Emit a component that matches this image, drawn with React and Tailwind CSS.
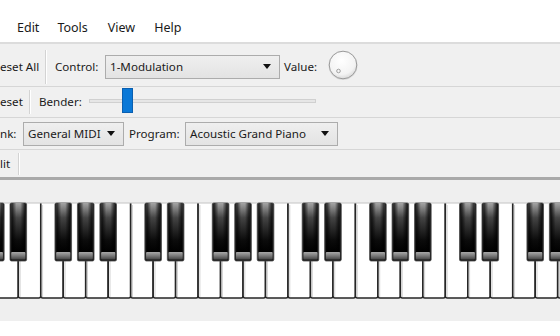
import React from "react";

const W = 22.475;
const X0 = -4.17;
const TOP = 23;
const WH = 95;
const BH = 58;
const BW = 16.6;

function Keyboard() {
  const whites = [];
  for (let i = 0; i < 27; i++) whites.push(X0 + i * W);
  const blacks = [];
  for (let b = 0; b < 27; b++) {
    const m = ((b - 2) % 7 + 7) % 7;
    if (m === 0 || m === 4) continue;
    blacks.push(X0 + b * W);
  }
  return (
    <svg width="560" height="142" viewBox="0 0 560 142" className="block">
      <defs>
        <linearGradient id="bk" x1="0" y1="0" x2="0" y2="1">
          <stop offset="0" stopColor="#a4a4a4" />
          <stop offset="0.3" stopColor="#444" />
          <stop offset="0.75" stopColor="#0c0c0c" />
          <stop offset="1" stopColor="#000" />
        </linearGradient>
        <linearGradient id="bkh" x1="0" y1="0" x2="1" y2="0">
          <stop offset="0" stopColor="#000" stopOpacity="0.8" />
          <stop offset="0.35" stopColor="#000" stopOpacity="0" />
          <stop offset="0.65" stopColor="#000" stopOpacity="0" />
          <stop offset="1" stopColor="#000" stopOpacity="0.8" />
        </linearGradient>
        <linearGradient id="bev" x1="0" y1="0" x2="0" y2="1">
          <stop offset="0" stopColor="#a8a8a8" />
          <stop offset="0.5" stopColor="#7a7a7a" />
          <stop offset="1" stopColor="#444" />
        </linearGradient>
      </defs>
      {whites.map((x, i) => (
        <g key={"w" + i}>
          <path
            d={`M${x} ${TOP} L${x} ${TOP + WH - 2} Q${x} ${TOP + WH} ${x + 2} ${TOP + WH} L${x + W - 2} ${TOP + WH} Q${x + W} ${TOP + WH} ${x + W} ${TOP + WH - 2} L${x + W} ${TOP}`}
            fill="#ffffff"
            stroke="#262626"
            strokeWidth="1.6"
          />
          <line x1={x + 1.8} y1={TOP + 2} x2={x + 1.8} y2={TOP + WH - 1} stroke="#d2d2d2" strokeWidth="1" />
        </g>
      ))}
      <line x1="0" y1={TOP} x2="560" y2={TOP} stroke="#c4c4c4" strokeWidth="1" />
      {blacks.map((c, i) => {
        const x = c - BW / 2;
        return (
          <g key={"b" + i}>
            <rect x={x} y={TOP} width={BW} height={BH} rx="1.5" fill="#1a1a1a" stroke="#4a4a4a" strokeWidth="0.8" />
            <rect x={x + 1.6} y={TOP} width={BW - 3.2} height={BH - 9} fill="url(#bk)" />
            <rect x={x + 1.6} y={TOP} width={BW - 3.2} height={BH - 9} fill="url(#bkh)" />
            <rect x={x + 1.2} y={TOP + BH - 9} width={BW - 2.4} height={7.5} rx="1" fill="url(#bev)" />
          </g>
        );
      })}
    </svg>
  );
}

function Combo({ text, className }) {
  return (
    <div
      className={
        "flex items-center justify-between h-[24px] border border-[#acacac] bg-gradient-to-b from-[#efefef] to-[#e3e3e3] pl-[4px] pr-[8px] whitespace-nowrap " +
        (className || "")
      }
    >
      <span>{text}</span>
      <svg width="8" height="5" viewBox="0 0 8 5">
        <path d="M0 0 L8 0 L4 5 Z" fill="#111" />
      </svg>
    </div>
  );
}

function Sep({ className }) {
  return <div className={"w-[2px] border-l border-[#d3d3d3] border-r border-r-white " + (className || "")} />;
}

export default function App() {
  return (
    <div
      className="w-[560px] h-[336px] overflow-hidden bg-white text-[#1a1a1a] text-[11.6px]"
      style={{ fontFamily: '"Noto Sans", "Open Sans", sans-serif' }}
    >
      {/* menu bar */}
      <div className="h-[42px] flex items-end pb-[4px] text-[12.5px] bg-white">
        <span className="ml-[17px]">Edit</span>
        <span className="ml-[18px]">Tools</span>
        <span className="ml-[20px]">View</span>
        <span className="ml-[19px]">Help</span>
      </div>
      <div className="h-[2px] bg-[#dcdcdc]" />
      {/* row 1 */}
      <div className="h-[43px] flex items-center pt-[3px] bg-[#f0f0f0] border-b border-[#d6d6d6]">
        <span className="w-[36px] whitespace-nowrap">eset All</span>
        <Sep className="ml-[9px] h-[34px]" />
        <span className="ml-[8px] w-[44px]">Control:</span>
        <Combo text="1-Modulation" className="ml-[6px] w-[175px]" />
        <span className="ml-[4px] w-[36px]">Value:</span>
        <svg width="32" height="32" viewBox="0 0 32 32" className="ml-[7px] mt-[-3px]">
          <defs>
            <radialGradient id="kn" cx="0.45" cy="0.35" r="0.7">
              <stop offset="0" stopColor="#ffffff" />
              <stop offset="0.7" stopColor="#f3f3f3" />
              <stop offset="1" stopColor="#d2d2d2" />
            </radialGradient>
          </defs>
          <circle cx="16" cy="16.5" r="14.5" fill="#c9c9c9" opacity="0.5" />
          <circle cx="16" cy="16" r="13.8" fill="url(#kn)" stroke="#9a9a9a" strokeWidth="1" />
          <circle cx="11.5" cy="22" r="1.8" fill="none" stroke="#a0a0a0" strokeWidth="1" />
        </svg>
      </div>
      {/* row 2 */}
      <div className="h-[31px] flex items-center bg-[#f0f0f0] border-b border-[#d6d6d6]">
        <span className="w-[19px]">eset</span>
        <Sep className="ml-[10px] h-[24px]" />
        <span className="ml-[8px] w-[44px]">Bender:</span>
        <div className="ml-[6px] relative w-[227px] h-[4px] border border-[#d0d0d0] bg-[#e6e6e6] mt-[-3px]">
          <div className="absolute left-[32px] top-[-12px] w-[11px] h-[25px] bg-[#0a78d7] border border-[#0a5fb0]" />
        </div>
      </div>
      {/* row 3 */}
      <div className="h-[32px] flex items-center bg-[#f0f0f0] border-b border-[#d6d6d6]">
        <span className="w-[22px]">nk:</span>
        <Combo text="General MIDI" className="ml-[1px] w-[101px]" />
        <span className="ml-[5px] w-[52px]">Program:</span>
        <Combo text="Acoustic Grand Piano" className="ml-[4px] w-[153px]" />
      </div>
      {/* row 4 */}
      <div className="h-[27px] flex items-center bg-[#f0f0f0]">
        <span className="w-[9px]">lit</span>
        <Sep className="ml-[9px] h-[22px]" />
      </div>
      <div className="h-[3px] bg-[#a9a9a9]" />
      {/* keyboard */}
      <div className="h-[141px] bg-[#efefef] overflow-hidden">
        <Keyboard />
      </div>
      <div className="h-[14px] bg-white" />
    </div>
  );
}
